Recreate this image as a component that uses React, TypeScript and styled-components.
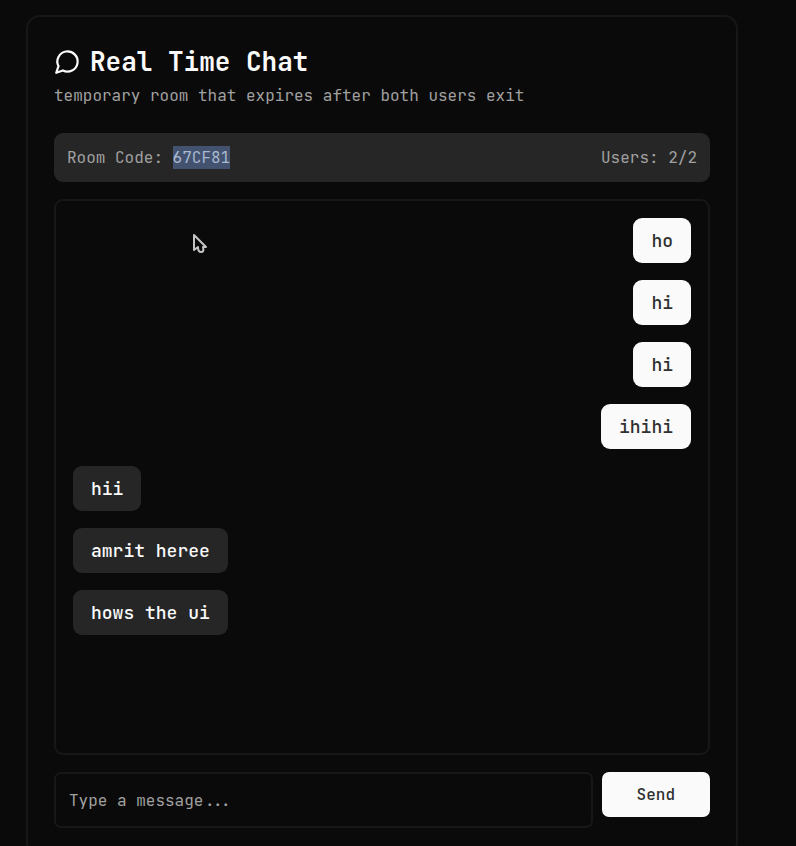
import React, { useState } from 'react';
import styled, { createGlobalStyle } from 'styled-components';

const GlobalStyle = createGlobalStyle`
  *, *::before, *::after { box-sizing: border-box; }
  body {
    margin: 0;
    background: #0a0a0a;
    color: #fafafa;
    font-family: "JetBrains Mono", "DejaVu Sans Mono", monospace;
  }
`;

const Page = styled.main`
  position: relative;
  height: 100vh;
  overflow: hidden;
  padding: 15px 58px 0 26px;
`;

const Card = styled.section`
  display: flex;
  flex-direction: column;
  gap: 17px;
  padding: 26px;
  border: 2px solid #171717;
  border-radius: 14px;
`;

const Header = styled.header`
  display: flex;
  flex-direction: column;
  gap: 4px;
  margin-bottom: 9px;
`;

const Title = styled.h1`
  display: flex;
  align-items: center;
  gap: 9px;
  margin: 0;
  font-size: 26px;
  line-height: 37px;
  font-weight: 700;
  white-space: nowrap;
`;

const TitleIcon = styled.svg`
  width: 27px;
  height: 27px;
  flex: none;
`;

const Subtitle = styled.p`
  margin: 0;
  color: #a1a1a1;
  font-size: 16px;
  line-height: 23px;
`;

const RoomBar = styled.div`
  display: flex;
  align-items: center;
  justify-content: space-between;
  padding: 13px;
  border-radius: 9px;
  background: #262626;
  color: #a1a1a1;
  font-size: 16px;
  line-height: 23px;
`;

const RoomCode = styled.span`
  display: inline-block;
  background: #42526f;
  color: #a9b9cf;
`;

const Log = styled.ul`
  display: flex;
  flex-direction: column;
  gap: 17px;
  height: 556px;
  margin: 0;
  padding: 17px;
  overflow-y: auto;
  list-style: none;
  border: 2px solid #171717;
  border-radius: 9px;
`;

const Bubble = styled.li<{ $own: boolean }>`
  align-self: ${(p) => (p.$own ? 'flex-end' : 'flex-start')};
  padding: 9px 18px;
  border-radius: 9px;
  background: ${(p) => (p.$own ? '#fafafa' : '#262626')};
  color: ${(p) => (p.$own ? '#303030' : '#fafafa')};
  font-size: 18px;
  font-weight: 500;
  line-height: 27px;
`;

const Composer = styled.form`
  display: flex;
  align-items: flex-start;
  gap: 9px;
`;

const MessageInput = styled.input`
  flex: 1;
  min-width: 0;
  height: 56px;
  padding: 0 13px;
  border: 2px solid #171717;
  border-radius: 7px;
  outline: none;
  background: transparent;
  color: #fafafa;
  font-family: inherit;
  font-size: 16px;
  &::placeholder { color: #a1a1a1; opacity: 1; }
`;

const SendButton = styled.button`
  height: 45px;
  padding: 0 35px;
  border: 0;
  border-radius: 7px;
  background: #fafafa;
  color: #303030;
  font-family: inherit;
  font-size: 16px;
  font-weight: 500;
  cursor: pointer;
`;

const Pointer = styled.svg`
  position: absolute;
  left: 192px;
  top: 233px;
  width: 16px;
  height: 22px;
  pointer-events: none;
`;

const initialMessages = [
  { text: 'ho', own: true },
  { text: 'hi', own: true },
  { text: 'hi', own: true },
  { text: 'ihihi', own: true },
  { text: 'hii', own: false },
  { text: 'amrit heree', own: false },
  { text: 'hows the ui', own: false },
];

export default function App() {
  const [messages, setMessages] = useState(initialMessages);
  const [draft, setDraft] = useState('');

  const send = (event: React.FormEvent) => {
    event.preventDefault();
    if (!draft.trim()) return;
    setMessages([...messages, { text: draft, own: true }]);
    setDraft('');
  };

  return (
    <>
      <GlobalStyle />
      <Page>
        <Card>
          <Header>
            <Title>
              <TitleIcon
                viewBox="0 0 24 24"
                fill="none"
                stroke="currentColor"
                strokeWidth="2"
                strokeLinecap="round"
                strokeLinejoin="round"
                aria-hidden="true"
              >
                <path d="M7.9 20A9 9 0 1 0 4 16.1L2 22Z" />
              </TitleIcon>
              Real Time Chat
            </Title>
            <Subtitle>temporary room that expires after both users exit</Subtitle>
          </Header>
          <RoomBar>
            <span>
              Room Code: <RoomCode>67CF81</RoomCode>
            </span>
            <span>Users: 2/2</span>
          </RoomBar>
          <Log aria-label="Messages">
            {messages.map((message, index) => (
              <Bubble key={index} $own={message.own}>
                {message.text}
              </Bubble>
            ))}
          </Log>
          <Composer onSubmit={send}>
            <MessageInput
              aria-label="Message"
              placeholder="Type a message..."
              value={draft}
              onChange={(event) => setDraft(event.target.value)}
            />
            <SendButton type="submit">Send</SendButton>
          </Composer>
        </Card>
        <Pointer viewBox="0 0 16 22" aria-hidden="true">
          <path
            d="M2 2V17L6 14C6 18 7 19 9 19S12 18 11 14H14Z"
            fill="#0a0a0a"
            stroke="#c4c4c4"
            strokeWidth="2"
            strokeLinejoin="round"
          />
        </Pointer>
      </Page>
    </>
  );
}
